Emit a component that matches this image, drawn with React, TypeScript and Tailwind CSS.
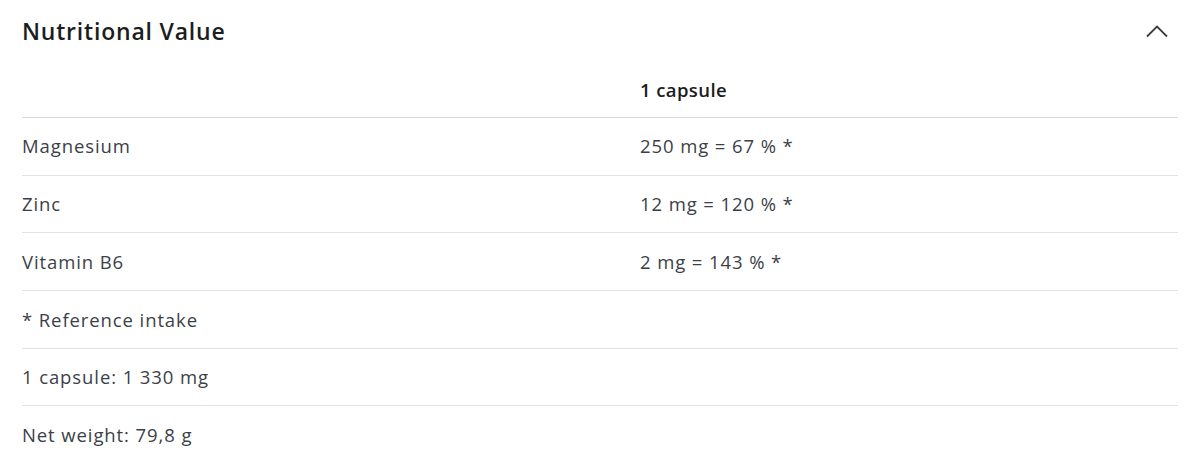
const rows = [
  { name: "Magnesium", value: "250 mg = 67 % *" },
  { name: "Zinc", value: "12 mg = 120 % *" },
  { name: "Vitamin B6", value: "2 mg = 143 % *" },
];

const notes = ["* Reference intake", "1 capsule: 1 330 mg", "Net weight: 79,8 g"];

export default function App() {
  return (
    <div className="w-[1200px] h-[467px] bg-white font-['Open_Sans',sans-serif] overflow-hidden">
      <div className="flex items-center justify-between h-[62px] pl-[22px] pr-[32px]">
        <h2 className="text-[23px] font-semibold text-[#1b1d21] tracking-[0.8px]">Nutritional Value</h2>
        <svg width="22" height="14" viewBox="0 0 22 14" fill="none" stroke="#3d3d3d" strokeWidth="1.8">
          <polyline points="1,12.5 11,2.5 21,12.5" />
        </svg>
      </div>
      <div className="mx-[22px] text-[18.5px] tracking-[0.9px]">
        <div className="grid grid-cols-[618px_1fr] h-[56px] items-center border-b border-[#d9d9df]">
          <div />
          <div className="font-semibold text-[#1b1d21] tracking-[0.4px]">1 capsule</div>
        </div>
        {rows.map((r) => (
          <div key={r.name} className="grid grid-cols-[618px_1fr] h-[57.7px] items-center border-b border-[#e3e3e6] text-[#3b3f48]">
            <div>{r.name}</div>
            <div>{r.value}</div>
          </div>
        ))}
        {notes.map((n, i) => (
          <div key={n} className={`h-[57.7px] flex items-center text-[#3b3f48] ${i < notes.length - 1 ? "border-b border-[#e3e3e6]" : ""}`}>
            {n}
          </div>
        ))}
      </div>
    </div>
  );
}
